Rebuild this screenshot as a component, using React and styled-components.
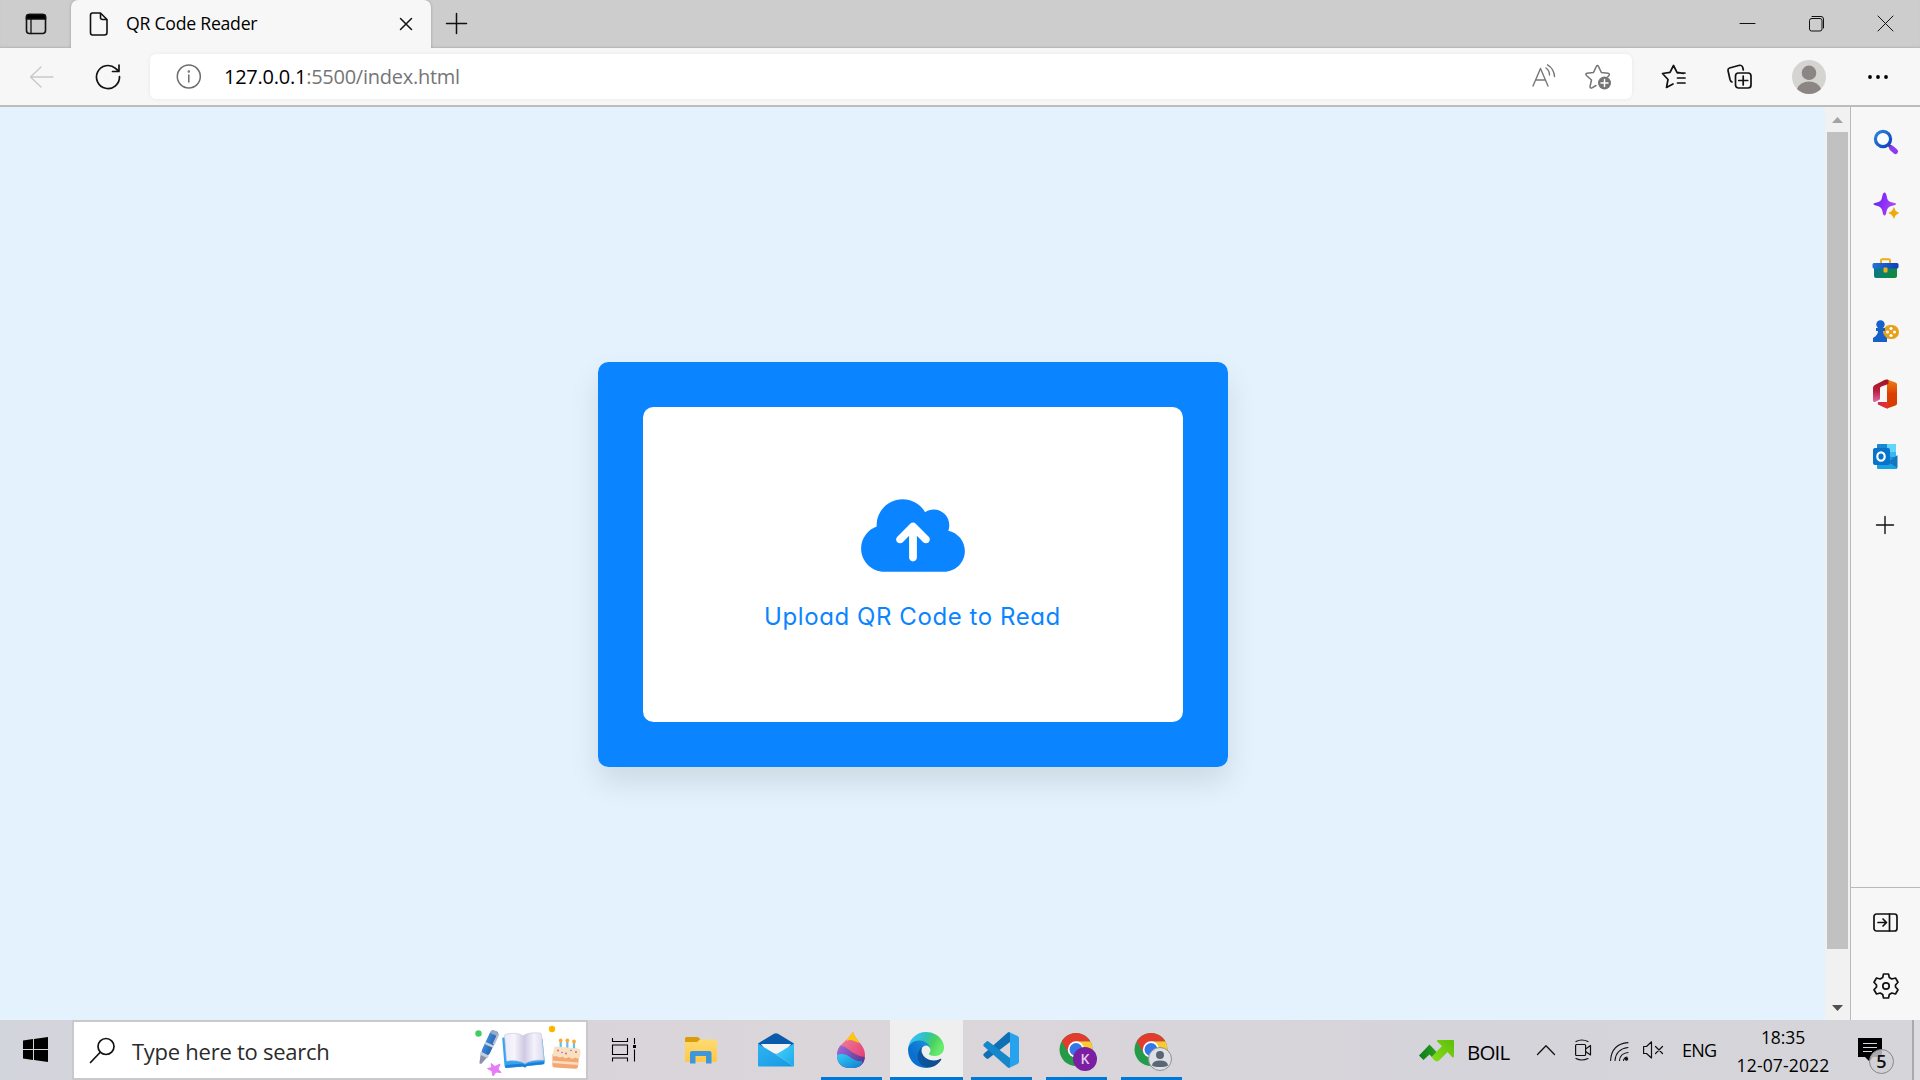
import React from "react";
import styled, { createGlobalStyle } from "styled-components";
import { FaCloudArrowUp } from "react-icons/fa6";

const Global = createGlobalStyle`
  * { box-sizing: border-box; }
  html, body { margin: 0; padding: 0; overflow: hidden; }
  body { font-family: "Open Sans", "Noto Sans", sans-serif; color: #000; }
  svg { display: block; flex: none; overflow: visible; }
`;

const Screen = styled.div`
  width: 1920px;
  height: 1080px;
  display: flex;
  flex-direction: column;
  background: #f7f7f7;
`;

const TabStrip = styled.div`
  height: 48px;
  display: flex;
  background: #cdcdcd;
  box-shadow: inset 0 -2px 2px -1px #b4b4b4;
`;

const TabActions = styled.div`
  width: 71px;
  display: flex;
  align-items: center;
  padding-left: 25px;
`;

const Tab = styled.div`
  width: 360px;
  height: 48px;
  display: flex;
  align-items: center;
  padding: 0 18px 0 18px;
  background: #f7f7f7;
  border-radius: 7px 7px 0 0;
  box-shadow: 0 0 3px rgba(0, 0, 0, 0.25);
  clip-path: inset(0 -4px 0 -4px);
`;

const TabTitle = styled.span`
  flex: 1;
  margin-left: 18px;
  padding-bottom: 2px;
  font-size: 17.7px;
  line-height: 24px;
  letter-spacing: ${(p) => p.$spacing}px;
  white-space: nowrap;
`;

const NewTab = styled.div`
  padding: 13px 0 0 15px;
  flex: 1;
`;

const WindowButtons = styled.div`
  display: flex;
  width: 207px;
  padding: 16px 0 0 27px;
  gap: 54px;
`;

const Toolbar = styled.div`
  height: 59px;
  display: flex;
  align-items: center;
  padding: 0 0 0 28px;
  background: #f7f7f7;
  border-bottom: 2px solid #bcbcbc;
`;

const NavButtons = styled.div`
  display: flex;
  align-items: center;
  gap: 41px;
  width: 122px;
`;

const AddressBar = styled.div`
  width: 1482px;
  height: 45px;
  display: flex;
  align-items: center;
  padding: 0 21px 0 26px;
  background: #fff;
  border-radius: 6px;
  box-shadow: 0 0 4px rgba(0, 0, 0, 0.07);
`;

const Url = styled.span`
  flex: 1;
  margin-left: 23px;
  padding-top: 1px;
  font-size: 20px;
  line-height: 28px;
  letter-spacing: ${(p) => p.$spacing}px;
  white-space: nowrap;
`;

const UrlRest = styled.span`
  color: #757575;
`;

const AddressActions = styled.div`
  display: flex;
  gap: 29px;
`;

const ToolbarActions = styled.div`
  display: flex;
  align-items: center;
  padding-left: 29px;
`;

const ToolSlot = styled.div`
  width: ${(p) => p.$w}px;
  display: flex;
`;

const Main = styled.div`
  height: 913px;
  display: flex;
`;

const Page = styled.div`
  width: 1825px;
  display: flex;
  align-items: center;
  justify-content: center;
  padding-top: 2px;
  background: #e3f2fd;
`;

const Card = styled.div`
  width: 630px;
  height: 405px;
  padding: 45px;
  background: #0b85ff;
  border-radius: 10.5px;
  box-shadow: 0 15px 30px rgba(0, 0, 0, 0.1);
`;

const DropZone = styled.div`
  height: 315px;
  display: flex;
  flex-direction: column;
  align-items: center;
  background: #fff;
  border-radius: 10.5px;
  color: #0b85ff;
  padding-top: 86.500px;
`;

const CloudIcon = styled(FaCloudArrowUp)`
  width: 104px;
  height: 83px;
`;

const UploadLabel = styled.p`
  margin: 22.500px 0 0;
  font-family: Inter, "Open Sans", sans-serif;
  font-feature-settings: "cv11", "ss03";
  font-weight: 400;
  font-size: 24px;
  line-height: 36px;
  letter-spacing: ${(p) => p.$spacing}px;
  white-space: nowrap;
`;

const Scrollbar = styled.div`
  width: 25px;
  display: flex;
  flex-direction: column;
  align-items: center;
  background: #f1f1f1;
`;

const ScrollArrow = styled.div`
  height: ${(p) => p.$h}px;
  display: flex;
  padding-top: ${(p) => p.$top}px;
`;

const ScrollThumb = styled.div`
  width: 21px;
  height: 817px;
  background: #c1c1c1;
`;

const Sidebar = styled.div`
  width: 70px;
  display: flex;
  flex-direction: column;
  border-left: 1px solid #b9b9b9;
  background: #f7f7f7;
`;

const SideApps = styled.div`
  height: 780px;
  display: flex;
  flex-direction: column;
  align-items: center;
  padding-top: 3px;
`;

const SideSlot = styled.div`
  height: ${(p) => p.$h || 63}px;
  width: 69px;
  display: flex;
  align-items: center;
  justify-content: center;
`;

const SideTools = styled.div`
  flex: 1;
  display: flex;
  flex-direction: column;
  border-top: 1px solid #b9b9b9;
  padding-top: 3px;
`;

const Taskbar = styled.div`
  height: 60px;
  display: flex;
  background: linear-gradient(90deg, #d3d5dc 0, #d9d4d9 500px, #dbd6da 900px, #d5d4da 1450px, #d6d5da 100%);
`;

const StartButton = styled.div`
  width: 72px;
  display: flex;
  align-items: center;
  padding: 0 0 1px 23px;
`;

const SearchBox = styled.div`
  width: 516px;
  height: 60px;
  display: flex;
  align-items: center;
  border: 2px solid #c9c9cb;
  background: #fff;
  padding-left: 16px;
`;

const SearchText = styled.span`
  flex: 1;
  margin-left: 17px;
  color: #2b2b2b;
  font-size: 22px;
  line-height: 30px;
  letter-spacing: ${(p) => p.$spacing}px;
  padding-top: 1px;
  white-space: nowrap;
`;

const Apps = styled.div`
  display: flex;
  width: 816px;
`;

const AppButton = styled.div`
  width: ${(p) => p.$w || 61}px;
  margin-right: ${(p) => p.$gap || 0}px;
  height: 60px;
  display: flex;
  align-items: center;
  justify-content: center;
  padding-top: ${(p) => (p.$open ? 3 + (p.$drop || 0) : 0)}px;
  padding-left: ${(p) => p.$left || 0}px;
  padding-right: ${(p) => p.$right || 0}px;
  background: ${(p) => (p.$active ? "#f0eff0" : "transparent")};
  border-bottom: ${(p) => (p.$open ? "3px solid #0078d7" : "0")};
`;

const Tray = styled.div`
  width: 508px;
  display: flex;
  align-items: center;
  padding-left: 15px;
`;

const TraySlot = styled.div`
  width: ${(p) => p.$w}px;
  padding-top: ${(p) => p.$top || 0}px;
  display: flex;
  flex: none;
  align-items: center;
`;

const TrayText = styled.span`
  font-size: ${(p) => p.$size}px;
  line-height: 28px;
  letter-spacing: ${(p) => p.$spacing || 0}px;
  white-space: nowrap;
`;

const Clock = styled.div`
  width: 92px;
  margin-right: 29px;
  padding-top: 1px;
  display: flex;
  flex: none;
  flex-direction: column;
  align-items: center;
`;

const ShowDesktop = styled.div`
  width: 8px;
  height: 60px;
  border-left: 2px solid #aaa9ad;
  background: #dddce0;
`;

const Stroke = ({ w, h, sw = 1.6, color = "#111", children }) => (
  <svg width={w} height={h} viewBox={`0 0 ${w} ${h}`} fill="none" stroke={color} strokeWidth={sw} strokeLinecap="round" strokeLinejoin="round">
    {children}
  </svg>
);

const Grad = ({ id, x1 = 0, y1 = 0, x2 = 0, y2 = 1, stops }) => (
  <linearGradient id={id} x1={x1} y1={y1} x2={x2} y2={y2}>
    {stops.map((color, i) => (
      <stop key={color + i} offset={i / (stops.length - 1)} stopColor={color} />
    ))}
  </linearGradient>
);

const Chrome = ({ children }) => (
  <svg width="38" height="38" viewBox="0 0 38 38">
    <circle cx="17" cy="16.500" r="16.500" fill="#249b48" />
    <path d="M17 16.500V8.300H31.300A16.500 16.500 0 0 1 17 33L24 20.600Z" fill="#fcc934" />
    <path d="M17 8.300H31.300A16.500 16.500 0 0 0 2.800 8.300L9.900 20.600Z" fill="#e33b2e" />
    <circle cx="17" cy="16.500" r="8.200" fill="#fff" />
    <circle cx="17" cy="16.500" r="6.500" fill="#3478e8" />
    {children}
  </svg>
);

const BadgeLetter = styled.text`
  font: 600 14px "Open Sans", sans-serif;
  fill: #e7c9f2;
  text-anchor: middle;
`;

const CountText = styled.text`
  font: 600 18px "Open Sans", sans-serif;
  fill: #111;
  text-anchor: middle;
`;

const SearchArt = () => (
  <svg width="112" height="56" viewBox="0 0 112 56">
    <defs>
      <Grad id="pages" x2={1} y2={0} stops={["#ece9f7", "#f6f4fc", "#cfc9e2", "#f4f2fb", "#dcd8ec"]} />
      <Grad id="penBody" x2={1} y2={0} stops={["#3f86d6", "#2868b4"]} />
    </defs>
    <circle cx="4.500" cy="11.500" r="3.200" fill="#43cb68" />
    <circle cx="78" cy="7" r="3.200" fill="#ffb400" />
    <g transform="translate(21.500 9) rotate(25)">
      <rect x="-4.300" y="0" width="8.600" height="26" rx="3.500" fill="url(#penBody)" />
      <path d="M-4.300 3Q-4 0 0 0T4.300 3V4H-4.300Z" fill="#9ba9c4" />
      <rect x="-4.500" y="14" width="9" height="2.500" fill="#c3cee0" />
      <rect x="2.800" y="2" width="2.200" height="11" rx="1" fill="#b5bfd3" />
      <path d="M-4 26H4L1 36H-1Z" fill="#8d91a8" />
      <path d="M-4.300 25H4.300V28H-4.300Z" fill="#c3cee0" />
    </g>
    <path d="M17 41.500L21 44.500L26 42L24 47L27 50.500L22 50L19 54L18 49L13.500 46.500L18 45.500Z" fill="#e77bf7" stroke="#e77bf7" strokeLinejoin="round" />
    <path d="M29 15.500Q28 15.500 28.300 17L30.500 44Q30.700 46 33 45.800L49 44.500L51 45.500L53 44L69 42.500Q71 42 70.800 40L68.500 17Z" fill="#31a6ee" />
    <path d="M32 43L49 41.500L51 43L53 41.500L70 39.500V42L53 44L51 45.500L49 44.500L31 46Z" fill="#1c7fd8" />
    <path d="M30.500 13Q31 12 33 12Q44 10 49 14Q54 10 65.500 11Q67.500 11 67.500 13L70 38Q57 37.500 51 41.500Q44 37.500 32.500 39Z" fill="url(#pages)" stroke="#c9c2de" strokeWidth=".6" />
    <g stroke="#5bc4ee" strokeWidth="2.200"><path d="M86.700 20V27M93.300 20V27M100 21V28" /></g>
    <g fill="#ffa92b"><circle cx="86.700" cy="18.500" r="1.900" /><circle cx="93.300" cy="18.500" r="1.900" /><circle cx="100" cy="19.500" r="1.900" /></g>
    <path d="M78.500 32L105 34L104 44Q104 47 101 46.800L81 45.500Q78.300 45.300 78.300 43Z" fill="#f3a775" />
    <path d="M78.300 38.500L104.600 40.500V43L78.300 41Z" fill="#fbdcc0" />
    <path d="M80 26Q80 24.500 82 24.500L104 26.500Q106.500 27 106.500 29L106 35Q104 37.500 101.500 35.500Q98 38 95 35Q91 37.500 88.500 34.500Q85 36.500 82.500 34Q80 35.500 78.500 33Z" fill="#f8e1bf" />
    <g fill="#e2548d"><circle cx="84" cy="28.500" r=".9" /><circle cx="92" cy="31.500" r=".9" /><circle cx="102" cy="30" r=".9" /></g>
    <g fill="#8a6be0"><circle cx="88" cy="30.500" r=".8" /><circle cx="97" cy="28.500" r=".8" /></g>
  </svg>
);

const FolderIcon = () => (
  <svg width="33" height="27" viewBox="0 0 33 27">
    <defs><Grad id="folder" stops={["#ffdb72", "#ffc845"]} /></defs>
    <path d="M0 1.500Q0 0 1.500 0H12Q13 0 14 1L15.500 2.500L13 5H0Z" fill="#dc9b08" />
    <path d="M0 5H12L15 2.500H30.500Q32 2.500 32 4V23.500Q32 25 30.500 25H1.500Q0 25 0 23.500Z" fill="url(#folder)" />
    <path d="M5 26.500V16Q5 14 7 14H24.500Q26.500 14 26.500 16V26.500H21V19H10.500V26.500Z" fill="#3e96dc" />
  </svg>
);

const MailIcon = () => (
  <svg width="36" height="34" viewBox="0 0 36 34">
    <defs>
      <Grad id="mailL" x2={1} stops={["#2eb4f2", "#1798e2"]} />
      <Grad id="mailR" x2={1} stops={["#42d4fb", "#20a8ea"]} />
    </defs>
    <path d="M0 10.500L16 .8Q18 -.3 20 .8L36 10.500V14H0Z" fill="#0a5bab" />
    <path d="M3 11H33L26 20H10Z" fill="#f4f4f5" />
    <path d="M0 10.500L18 21.500L36 33.500H1Q0 33.500 0 32.500Z" fill="url(#mailL)" />
    <path d="M36 10.500L18 21.500L36 33.500Z" fill="url(#mailR)" />
  </svg>
);

const PaintIcon = () => (
  <svg width="28" height="36" viewBox="0 0 28 36">
    <defs>
      <clipPath id="drop"><path d="M16 0Q17 4 23 11Q28 17 28 23Q28 36 14 36Q0 36 0 23Q0 16 6 11Q12 6 16 0Z" /></clipPath>
      <Grad id="paintPink" x2={1} stops={["#f28ba0", "#e2316f"]} />
      <Grad id="paintPurple" x2={1} y2={0.5} stops={["#a06ce0", "#5d3a92"]} />
      <Grad id="paintBlue" x2={1} stops={["#35cdf5", "#0d7fd2"]} />
    </defs>
    <g clipPath="url(#drop)">
      <rect width="28" height="36" fill="url(#paintPink)" />
      <path d="M8 0H28V12Q21 11 17 9Q13 7 10 9Z" fill="#fdc70c" />
      <path d="M0 14Q5 12 11 17Q19 24 28 25V36H0Z" fill="url(#paintPurple)" />
      <path d="M0 23Q7 20 13 25Q19 30 25 29V36H0Z" fill="url(#paintBlue)" />
    </g>
  </svg>
);

const EdgeIcon = () => (
  <svg width="36" height="36" viewBox="4.600 4.600 256 256">
    <defs>
      <Grad id="edgeDark" x2={1} y2={0} stops={["#0c59a4", "#114a8b"]} />
      <Grad id="edgeMid" x1={1} y1={0} x2={0} y2={1} stops={["#1b9de2", "#1383d4", "#0a6fd0", "#0078d4"]} />
      <Grad id="edgeTop" x2={1} y2={0.4} stops={["#35c1f1", "#34c1ed", "#2fc2b8", "#4bd05e", "#66eb6e"]} />
    </defs>
    <path fill="url(#edgeDark)" d="M235.680 195.460a93.730 93.730 0 0 1-10.540 4.710 101.870 101.870 0 0 1-35.900 6.460c-47.320 0-88.540-32.550-88.540-74.320A31.480 31.480 0 0 1 117.130 105c-42.800 1.800-53.800 46.400-53.800 72.530 0 73.880 68.090 81.370 82.760 81.370 7.910 0 19.840-2.300 27-4.560l1.310-.440A128.340 128.340 0 0 0 241 201.100a4 4 0 0 0-5.320-5.640z" />
    <path fill="url(#edgeMid)" d="M110.340 246.340A79.200 79.200 0 0 1 87.600 225a80.720 80.720 0 0 1 29.530-120c3.120-1.470 8.450-4.130 15.540-4a32.350 32.350 0 0 1 25.690 13 31.880 31.880 0 0 1 6.360 18.660c0-.210 24.460-79.600-80-79.600-43.900 0-80 41.660-80 78.210a130.150 130.150 0 0 0 12.110 56 128 128 0 0 0 156.380 67.110 75.550 75.550 0 0 1-62.780-8z" />
    <path fill="url(#edgeTop)" d="M156.940 153.780c-.810 1.050-3.300 2.500-3.300 5.660 0 2.610 1.700 5.120 4.720 7.230 14.380 10 41.490 8.680 41.560 8.680a59.560 59.560 0 0 0 30.270-8.350 61.380 61.380 0 0 0 30.430-52.880c.260-22.410-8-37.310-11.340-43.910C228.090 28.760 182.350 4.630 132.610 4.630a128 128 0 0 0-128 126.200c.480-36.540 36.800-66.050 80-66.050 3.500 0 23.460.340 42 10.070 16.340 8.580 24.900 18.940 30.850 29.210 6.180 10.670 7.280 24.150 7.280 29.520s-2.740 13.330-7.800 20.200z" />
  </svg>
);

const CodeIcon = () => (
  <svg width="36" height="36" viewBox="0 0 36 36">
    <path d="M27 .3V10L5.500 26.500Q4.500 27.300 3.500 26.500L.8 24Q-.3 22.800 .8 21.800L24.500 .8Q25.700 -.3 27 .3Z" fill="#0f6fb4" />
    <path d="M27 35.700V26L5.500 9.500Q4.500 8.700 3.500 9.500L.8 12Q-.3 13.200 .8 14.200L24.500 35.200Q25.700 36.300 27 35.700Z" fill="#1687ca" />
    <path d="M26.500 .2L34.500 4Q36 4.700 36 6.300V29.700Q36 31.300 34.500 32L26.500 35.800Q25.500 36 25 35.500Q27 36 27 33.500V2.500Q27 0 25 .5Q25.500 0 26.500 .2Z" fill="#27a3ee" />
  </svg>
);

export default function App() {
  return (
    <Screen>
      <Global />
      <TabStrip>
        <TabActions>
          <Stroke w={22} h={22}>
            <rect x="1.500" y="1.500" width="19" height="19" rx="3" />
            <path d="M1.500 6V4Q1.500 1.500 4 1.500H18Q20.500 1.500 20.500 4V6Z" fill="#000" />
            <path d="M6 6V20.500" strokeWidth="1.300" />
          </Stroke>
        </TabActions>
        <Tab>
          <Stroke w={19} h={24}>
            <path d="M3.500 1H11.500L18 7.500V20.500Q18 23 15.500 23H3.500Q1.500 23 1.500 20.500V3.500Q1.500 1 3.500 1ZM11.500 1V5.500Q11.500 7.500 13.500 7.500H18" />
          </Stroke>
          <TabTitle $spacing={-0.27}>QR Code Reader</TabTitle>
          <Stroke w={14} h={14} sw={1.5}><path d="M1.500 1.500L12.500 12.500M12.500 1.500L1.500 12.500" /></Stroke>
        </Tab>
        <NewTab><Stroke w={21} h={21} sw={1.5}><path d="M10.500 .5V20.500M.5 10.500H20.500" /></Stroke></NewTab>
        <WindowButtons>
          <Stroke w={15} h={15} sw={1}><path d="M0 7.500H15" /></Stroke>
          <Stroke w={15} h={15} sw={1}><rect x=".5" y="2.500" width="12.500" height="12.500" rx="2" /><path d="M3 .5H12Q14.500 .5 14.500 3V12" /></Stroke>
          <Stroke w={15} h={15} sw={1}><path d="M0 0L15 15M15 0L0 15" /></Stroke>
        </WindowButtons>
      </TabStrip>
      <Toolbar>
        <NavButtons>
          <Stroke w={26} h={22} sw={1.4} color="#c9c9c9"><path d="M25 11H2.500M13 1L2.500 11L13 21" /></Stroke>
          <Stroke w={26} h={26} sw={1.7}><path d="M24.500 12.500A11.500 11.500 0 1 1 20.500 4.300L23.500 7M24 1V7.500H17.500" /></Stroke>
        </NavButtons>
        <AddressBar>
          <Stroke w={25} h={25} sw={1.5} color="#6d6d6d"><circle cx="12.800" cy="12.500" r="11.500" /><path d="M12.800 11V18" /><circle cx="12.800" cy="7.500" r=".5" /></Stroke>
          <Url $spacing={-0.25}>127.0.0.1<UrlRest>:5500/index.html</UrlRest></Url>
          <AddressActions>
            <Stroke w={24} h={24} sw={1.4} color="#777"><path d="M1 22L8.500 4.500L16 22M3.500 16H13.500M14 4Q17.500 6.500 17.500 11M15.500 .8Q22 4.500 22.500 12.500" /></Stroke>
            <Stroke w={26} h={26} sw={1.5} color="#757575">
              <path d="M22.500 13L24 11.500Q25 9.500 23 9.200L16.300 8.400L13.500 2.500Q12.300 .5 11.300 2.500L8.500 8.400L2 9.300Q0 9.800 1.500 11.500L6.500 16L5 22.500Q5 24.800 7 23.800L11 21.500" />
              <circle cx="19.500" cy="19" r="6.500" fill="#757575" stroke="none" /><path d="M19.500 15.500V22.500M16 19H23" stroke="#fff" />
            </Stroke>
          </AddressActions>
        </AddressBar>
        <ToolbarActions>
          <ToolSlot $w={66}>
            <Stroke w={25} h={25} sw={1.7}><path d="M22.500 9.300L16 8.400L12.500 1.500L9 8.400L1.500 9.500L7 15.500L5.500 23.500L12 20M16.500 9H24M16.500 14H24M16.500 19H24" /></Stroke>
          </ToolSlot>
          <ToolSlot $w={65}>
            <Stroke w={25} h={25} sw={1.7}><path d="M5 18Q3.500 17.500 3 15.500L1 6.500Q.8 4.500 2.500 4L12.500 1.300Q15 1 15.700 3.200L16.300 6" /><rect x="8.500" y="9" width="15.500" height="15" rx="3" /><path d="M16.200 12V21M11.700 16.500H20.700" /></Stroke>
          </ToolSlot>
          <ToolSlot $w={76}>
            <svg width="34" height="34" viewBox="0 0 34 34"><circle cx="17" cy="17" r="17" fill="#d6d4d1" /><circle cx="17" cy="12.800" r="7.300" fill="#8b8683" /><path d="M5 29Q8 21.500 17 21.500T29 29Q24 34 17 34T5 29Z" fill="#8b8683" /></svg>
          </ToolSlot>
          <svg width="20" height="4" viewBox="0 0 20 4"><circle cx="2" cy="2" r="1.900" /><circle cx="10" cy="2" r="1.900" /><circle cx="18" cy="2" r="1.900" /></svg>
        </ToolbarActions>
      </Toolbar>
      <Main>
        <Page>
          <Card>
            <DropZone>
              <CloudIcon />
              <UploadLabel $spacing={0.58}>Upload QR Code to Read</UploadLabel>
            </DropZone>
          </Card>
        </Page>
        <Scrollbar>
          <ScrollArrow $h={25} $top={10}><svg width="11" height="6"><path d="M0 6L5.500 0L11 6Z" fill="#a3a3a3" /></svg></ScrollArrow>
          <ScrollThumb />
          <ScrollArrow $h={71} $top={56}><svg width="11" height="6"><path d="M0 0L5.500 6L11 0Z" fill="#505050" /></svg></ScrollArrow>
        </Scrollbar>
        <Sidebar>
          <SideApps>
            <SideSlot>
              <svg width="26" height="26" viewBox="0 0 26 26">
                <defs><Grad id="lens" x2={1} stops={["#2e86d8", "#0d3fc0"]} /></defs>
                <path d="M16 16.500L18.500 18.500" stroke="#3a3044" strokeWidth="3" /><path d="M18.500 19L22.500 22.500" stroke="#8b3cf0" strokeWidth="5" strokeLinecap="round" /><circle cx="10" cy="10" r="7.600" fill="#f8fbff" stroke="url(#lens)" strokeWidth="3.200" />
              </svg>
            </SideSlot>
            <SideSlot>
              <svg width="28" height="28" viewBox="0 0 28 28">
                <defs><Grad id="spark" x2={1} y2={0.3} stops={["#4a35d8", "#8a2cf8", "#a84cf8"]} /></defs>
                <path d="M12.500 1.500Q14 1.500 14.800 5.500Q15.500 10 18.500 11L22.500 12Q26 13 22.500 14.200L18.500 15.200Q15.500 16 14.500 20.500Q14 24.500 12.500 24.500T10.500 20.500Q9.500 16 6.500 15.200L3 14.200Q-.5 13 3 12L6.500 11Q9.500 10 10.200 5.500Q11 1.500 12.500 1.500Z" fill="url(#spark)" />
                <path d="M21.500 16.500Q22 16 22.500 17Q23 20.500 26.500 21.500Q27.500 22 26.500 22.500Q23 23.500 22.500 27Q22 28 21.500 27Q20.500 23.500 17 22.500Q16 22 17 21.500Q20.500 20.500 21.500 16.500Z" fill="#edaa09" />
              </svg>
            </SideSlot>
            <SideSlot>
              <svg width="27" height="20" viewBox="0 0 27 20">
                <defs><Grad id="box" x2={1} y2={0.4} stops={["#0f6f9c", "#0a7f70", "#128a3c"]} /><Grad id="lid" x2={1} y2={0} stops={["#2473d8", "#0f3fb8"]} /></defs>
                <path d="M9 5V2.500Q9 1.200 10.300 1.200H16.700Q18 1.200 18 2.500V5" fill="none" stroke="#efac18" strokeWidth="2" /><rect x="2" y="8" width="23" height="12" rx="2" fill="url(#box)" /><rect x=".5" y="5" width="26" height="5.500" rx="1.500" fill="url(#lid)" /><rect x="11.500" y="9.500" width="4" height="5" rx="1" fill="#f0b019" />
              </svg>
            </SideSlot>
            <SideSlot>
              <svg width="28" height="22" viewBox="0 0 28 22"><rect x="11" y="5" width="16" height="14" rx="7" fill="#e7a01a" /><g fill="#fff"><circle cx="19" cy="8.500" r="1.600" /><circle cx="19" cy="15.500" r="1.600" /><circle cx="15.500" cy="12" r="1.600" /><circle cx="22.500" cy="12" r="1.600" /></g><circle cx="8.500" cy="4.500" r="4.200" fill="#1760c8" /><path d="M4 8H13V11H11Q11 15 15 18V22H1V18Q6 15 6 11H4Z" fill="#1760c8" /></svg>
            </SideSlot>
            <SideSlot>
              <svg width="25" height="29" viewBox="0 -.500 25 29">
                <defs><Grad id="offL" stops={["#a31420", "#b81f3c", "#df6bb0"]} /><Grad id="offR" stops={["#f0810f", "#dc3f05", "#d83b01"]} /><Grad id="offB" x2={1} y2={0} stops={["#c8264c", "#e8352a"]} /></defs>
                <path d="M14 0L22.500 3Q24 3.500 24 5V24Q24 25.500 22.500 26L14 29Z" fill="url(#offR)" />
                <path d="M5.500 22.500H15V29L13 28.800L5 25Q4 23 5.500 22.500Z" fill="url(#offB)" />
                <path d="M14 0L15.500 .5V4.500L8.500 7Q7 7.500 7 9V19Q7 20 6 20.500L2 22.500Q0 23 0 21V8.500Q0 6.500 1.800 5.500L11.500 .5Q12.700 -.2 14 0Z" fill="url(#offL)" />
              </svg>
            </SideSlot>
            <SideSlot>
              <svg width="25" height="25" viewBox="0 0 25 25"><path d="M4 1Q4 0 5 0H22Q23 0 23 1V19H4Z" fill="#1988d2" /><path d="M14 0H22Q23 0 23 1V8H14Z" fill="#63d5fa" /><path d="M14 8H23V13H14Z" fill="#38b6f2" /><path d="M4 13L24 14V25H5Q4 25 4 24Z" fill="#1aa1e4" /><path d="M15 18L24.500 11V24Z" fill="#1477be" /><rect y="4" width="17" height="17" rx="2" fill="#0873cb" /><ellipse cx="8" cy="12.500" rx="3.700" ry="4.200" fill="none" stroke="#fff" strokeWidth="2.200" /></svg>
            </SideSlot>
            <SideSlot $h={73}><Stroke w={18} h={18} sw={1.4}><path d="M8 .5V17.500M-.5 9H16.500" /></Stroke></SideSlot>
          </SideApps>
          <SideTools>
            <SideSlot><Stroke w={25} h={19} sw={1.7}><rect x="1" y="1" width="23" height="17" rx="2.500" /><path d="M16.500 1V18M5 9.500H13M10 6L13.500 9.500L10 13" /></Stroke></SideSlot>
            <SideSlot><Stroke w={26} h={26} sw={1.7}><path d="M10.500 1H15.500L16.300 4.500L18.800 6L22.500 5L25 9.200L22.500 12V14L25 16.800L22.500 21L18.800 20L16.300 21.500L15.500 25H10.500L9.700 21.500L7.200 20L3.500 21L1 16.800L3.500 14V12L1 9.200L3.500 5L7.200 6L9.700 4.500Z" /><circle cx="13" cy="13" r="3.200" /></Stroke></SideSlot>
          </SideTools>
        </Sidebar>
      </Main>
      <Taskbar>
        <StartButton><svg width="25" height="25" viewBox="0 0 25 25"><path d="M0 3.500L10 2V12H0ZM11 1.900L25 0V12H11ZM0 13H10V23L0 21.500ZM11 13H25V25L11 23.100Z" /></svg></StartButton>
        <SearchBox>
          <Stroke w={25} h={25} sw={1.7}><circle cx="16" cy="8.500" r="8" /><path d="M10 14.500L.5 24.500" /></Stroke>
          <SearchText $spacing={-0.26}>Type here to search</SearchText>
          <SearchArt />
        </SearchBox>
        <Apps>
          <AppButton $w={73} $gap={3}>
            <svg width="25" height="24" viewBox="0 0 25 24" fill="none" stroke="#000" strokeWidth="1.100"><path d="M.5 0V3.500H15.500V0M.5 7H15.500V16.500H.5ZM.5 23.500V20H15.500V23.500M22.500 0V6M22.500 11.500V23.500" /><rect x="21" y="7" width="3" height="3" fill="#000" stroke="none" /></svg>
          </AppButton>
          <AppButton $w={75}><FolderIcon /></AppButton>
          <AppButton $w={75} $right={1} $gap={7}><MailIcon /></AppButton>
          <AppButton $open $right={1} $gap={8}><PaintIcon /></AppButton>
          <AppButton $w={73} $open $active $right={1} $gap={8}><EdgeIcon /></AppButton>
          <AppButton $open $right={1} $gap={14}><CodeIcon /></AppButton>
          <AppButton $open $drop={4} $left={2} $gap={14}>
            <Chrome><circle cx="26" cy="26" r="12" fill="#7a1fa2" /><BadgeLetter x="26" y="31">K</BadgeLetter></Chrome>
          </AppButton>
          <AppButton $open $drop={4} $left={2}>
            <Chrome>
              <circle cx="26" cy="26" r="11.500" fill="#dde0e5" stroke="#8c9096" />
              <circle cx="26" cy="22" r="4" fill="#5a6673" />
              <path d="M18 32.500Q18.500 27.500 26 27.500T34 32.500Q31.500 34 26 34T18 32.500Z" fill="#5a6673" />
            </Chrome>
          </AppButton>
        </Apps>
        <Tray>
          <TraySlot $w={48}>
            <svg width="35" height="21" viewBox="0 0 35 21">
              <defs><Grad id="stockA" x2={1} y2={0} stops={["#0e7a1e", "#36a81c"]} /><Grad id="stockB" x1={0} y1={1} x2={1} y2={0} stops={["#86dc1c", "#5fbe0a"]} /></defs>
              <path d="M0 15.500L10.500 4.500L21.500 16L16.500 21L10.500 14.500L4.500 20Z" fill="url(#stockA)" />
              <path d="M16.500 21L12.500 17L23 6L18 1.500Q17.500 0 19 0H34Q35 0 35 1V16.500Q34.500 18 33 17L28.500 12L20 20.500Q18 22 16.500 21Z" fill="url(#stockB)" />
            </svg>
          </TraySlot>
          <TraySlot $w={70} $top={4}><TrayText $size={20.5} $spacing={-0.8}>BOIL</TrayText></TraySlot>
          <TraySlot $w={38}><Stroke w={18} h={10} sw={1.3}><path d="M.5 9.500L9 .8L17.500 9.500" /></Stroke></TraySlot>
          <TraySlot $w={35}>
            <Stroke w={17} h={24} sw={1.2}><rect x=".6" y="6.500" width="10" height="11" rx="1" /><path d="M10.600 11L15.500 7.500V17L10.600 13.500M1 3.500Q6.500 .5 13 3.500M1 20.500Q6.500 23.500 13 20.500" /></Stroke>
          </TraySlot>
          <TraySlot $w={33} $top={2}>
            <Stroke w={19} h={19} sw={1.1}><path d="M.6 18.500Q1.500 2 18 .6M5 18.500Q6 7 18 5.500M9.500 18.500Q10 11.500 18 10.500M13.500 18.500Q14 15.500 17 15" /><circle cx="16.500" cy="17" r="1.200" fill="#111" /></Stroke>
          </TraySlot>
          <TraySlot $w={39}>
            <Stroke w={20} h={18} sw={1.2}><path d="M.6 5.500H3.500L8.500 .8V17L3.500 12.500H.6ZM12.500 5.500L19.500 12.500M19.500 5.500L12.500 12.500" /></Stroke>
          </TraySlot>
          <TraySlot $w={55}><TrayText $size={18} $spacing={-0.8}>ENG</TrayText></TraySlot>
          <Clock>
            <TrayText $size={17.5} $spacing={-0.1}>18:35</TrayText>
            <TrayText $size={17.5} $spacing={0.15}>12-07-2022</TrayText>
          </Clock>
          <TraySlot $w={37} $top={12}>
            <svg width="37" height="36" viewBox="0 0 37 36">
              <path d="M0 0H24V19H15L11.500 23.500L7 19H0Z" />
              <path d="M5 5.500H19M5 9.500H19M5 13.500H14" stroke="#d8d8dc" strokeWidth="1.200" />
              <circle cx="23.500" cy="23.500" r="12" fill="#d0cfd4" fillOpacity=".82" stroke="#88878b" />
              <CountText x="23.500" y="29.500">5</CountText>
            </svg>
          </TraySlot>
        </Tray>
        <ShowDesktop />
      </Taskbar>
    </Screen>
  );
}
